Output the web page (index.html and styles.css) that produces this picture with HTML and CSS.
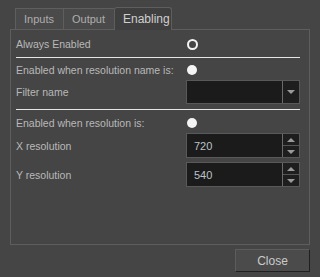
FILE: index.html
```html
<!DOCTYPE html>
<html lang="en">
<head>
    <meta charset="UTF-8">
    <title>Enabling</title>
    <link rel="stylesheet" href="styles.css">
</head>
<body>
    <div class="tabs">
        <div class="tab">Inputs</div>
        <div class="tab">Output</div>
        <div class="tab active">Enabling</div>
    </div>
    <div class="panel">
        <div class="row">
            <span class="label">Always Enabled</span>
            <span class="control"><span class="radio ring"></span></span>
        </div>
        <div class="sep"></div>
        <div class="row first">
            <span class="label">Enabled when resolution name is:</span>
            <span class="control"><span class="radio"></span></span>
        </div>
        <div class="row field">
            <span class="label">Filter name</span>
            <div class="control box combo">
                <span class="value"></span>
                <span class="drop"><span class="arrow down"></span></span>
            </div>
        </div>
        <div class="sep"></div>
        <div class="row first">
            <span class="label">Enabled when resolution is:</span>
            <span class="control"><span class="radio"></span></span>
        </div>
        <div class="row field spin-row">
            <span class="label">X resolution</span>
            <div class="control box spin">
                <span class="value">720</span>
                <span class="steps">
                    <span class="step"><span class="arrow up"></span></span>
                    <span class="step"><span class="arrow down"></span></span>
                </span>
            </div>
        </div>
        <div class="row field spin-row next">
            <span class="label">Y resolution</span>
            <div class="control box spin">
                <span class="value">540</span>
                <span class="steps">
                    <span class="step"><span class="arrow up"></span></span>
                    <span class="step"><span class="arrow down"></span></span>
                </span>
            </div>
        </div>
    </div>
    <div class="footer">
        <button class="close-btn">Close</button>
    </div>
</body>
</html>
```

FILE: styles.css
```css
:root {
    --bg: #454545;
    --text: #b9b9b9;
    --border: #5e5e5e;
    --field-bg: #1b1b1b;
    --arrow: #9a9a9a;
}

body {
    margin: 0;
    background: var(--bg);
    color: var(--text);
    font-family: 'Liberation Sans', Arial, sans-serif;
    font-size: 10.5px;
    width: 320px;
    height: 277px;
    overflow: hidden;
}

.tabs {
    display: flex;
    align-items: flex-end;
    height: 22px;
    padding: 7px 0 0 15px;
}

.tab {
    box-sizing: border-box;
    height: 21px;
    padding: 0 8px;
    line-height: 20px;
    background: #4a4a4a;
    border: 1px solid var(--border);
    border-bottom: none;
    border-right: none;
    color: #aeaeae;
    font-size: 11px;
}

.tab:nth-child(1) { width: 48px; }
.tab:nth-child(2) { width: 51px; }

.tab.active {
    width: 58px;
    height: 23px;
    line-height: 22px;
    margin-bottom: -1px;
    background: #3f3f3f;
    border: 1px solid var(--border);
    border-bottom: none;
    border-radius: 3px 3px 0 0;
    color: #cfcfcf;
    font-size: 12px;
}

.panel {
    box-sizing: border-box;
    width: 300px;
    height: 216px;
    margin-left: 10px;
    padding: 6px 9px 0 5px;
    border: 1px solid var(--border);
}

.row {
    display: flex;
    align-items: center;
    height: 16px;
}

.row.first {
    margin-top: 4px;
}

.sep + .row.first {
    margin-top: 5px;
}

.sep + .row.first:nth-child(3) {
    margin-top: 4px;
}

.row.field {
    height: 24px;
    margin-top: 2px;
}

.row.spin-row {
    height: 25px;
}

.row.next {
    margin-top: 4px;
}

.label {
    flex: 1;
}

.control {
    width: 114px;
    display: flex;
    align-items: center;
}

.sep {
    height: 1px;
    margin-top: 5px;
    background: #e6e6e6;
}

.radio {
    box-sizing: border-box;
    width: 10px;
    height: 10px;
    margin-left: 1px;
    border-radius: 50%;
    background: #f4f4f4;
}

.radio.ring {
    width: 11px;
    height: 11px;
    background: transparent;
    border: 2.5px solid #f4f4f4;
}

.box {
    box-sizing: border-box;
    height: 100%;
    border: 1px solid #595959;
    background: var(--field-bg);
    align-items: stretch;
}

.value {
    flex: 1;
    padding-left: 7px;
    display: flex;
    align-items: center;
    color: #bcc2c8;
    font-size: 11px;
}

.drop {
    width: 16px;
    border-left: 1px solid #6a6a6a;
    display: flex;
    align-items: center;
    justify-content: center;
    background: #1e1e1e;
}

.steps {
    width: 16px;
    display: flex;
    flex-direction: column;
    gap: 1px;
    background: #555;
    border-left: 1px solid #6a6a6a;
}

.step {
    flex: 1;
    display: flex;
    align-items: center;
    justify-content: center;
    background: #1e1e1e;
}

.arrow {
    width: 0;
    height: 0;
    border-left: 4px solid transparent;
    border-right: 4px solid transparent;
}

.arrow.up {
    border-bottom: 4px solid var(--arrow);
}

.arrow.down {
    border-top: 4px solid var(--arrow);
}

.footer {
    display: flex;
    justify-content: flex-end;
    padding: 4px 10px 0 0;
}

.close-btn {
    box-sizing: border-box;
    width: 75px;
    height: 23px;
    background: #4b4b4b;
    border: 1px solid #5c5c5c;
    border-right-color: #202020;
    border-bottom-color: #202020;
    color: #cacaca;
    font-family: 'Liberation Sans', Arial, sans-serif;
    font-size: 12px;
    padding: 0;
}
```
